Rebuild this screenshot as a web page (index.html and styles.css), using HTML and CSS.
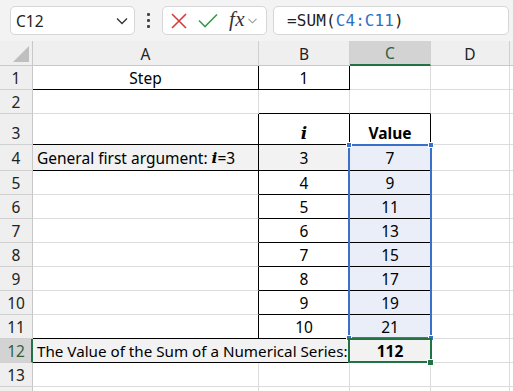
FILE: index.html
```html
<!DOCTYPE html>
<html>
<head>
<meta charset="utf-8">
<link rel="stylesheet" href="styles.css">
</head>
<body>
<div class="toolbar">
  <div class="namebox">
    <span class="nb-text">C12</span>
    <svg class="nb-chev" width="12" height="8" viewBox="0 0 12 8"><path d="M1 1.5 L6 6.5 L11 1.5" fill="none" stroke="#333" stroke-width="1.3"/></svg>
  </div>
  <div class="dots"><span></span><span></span><span></span></div>
  <div class="fxgroup">
    <svg class="ic-x" width="16" height="16" viewBox="0 0 16 16"><path d="M1 1 L15 15 M15 1 L1 15" stroke="#d83b3b" stroke-width="1.6" fill="none"/></svg>
    <svg class="ic-ok" width="20" height="15" viewBox="0 0 20 15"><path d="M1 7.5 L7 13.5 L19 1.5" stroke="#3c9a4f" stroke-width="1.6" fill="none"/></svg>
    <span class="fx">fx</span>
    <svg class="fx-chev" width="9" height="6" viewBox="0 0 9 6"><path d="M0.5 0.8 L4.5 4.8 L8.5 0.8" fill="none" stroke="#9a9a9a" stroke-width="1.1"/></svg>
  </div>
  <div class="formula">=SUM(<span class="ref">C4:C11</span>)</div>
</div>

<div class="sheet">
  <div class="corner"><span class="tri"></span></div>
  <div class="ch">A</div><div class="ch">B</div><div class="ch ch-act">C</div><div class="ch">D</div><div class="ch e"></div>

  <div class="rh">1</div><div class="c kb kr">Step</div><div class="c kb kr">1</div><div class="c"></div><div class="c"></div><div class="c e"></div>
  <div class="rh">2</div><div class="c"></div><div class="c kb"></div><div class="c kb"></div><div class="c"></div><div class="c e"></div>
  <div class="rh">3</div><div class="c kb kr"></div><div class="c kb kr"><span class="mi big">i</span></div><div class="c kb kr b">Value</div><div class="c"></div><div class="c e"></div>
  <div class="rh r4">4</div><div class="c g kb kr l r4">General first argument:&nbsp;<span class="mi">i</span>=3</div><div class="c g kb kr r4">3</div><div class="c bl kb kr r4">7</div><div class="c"></div><div class="c e"></div>
  <div class="rh">5</div><div class="c kr"></div><div class="c kb kr">4</div><div class="c bl kb kr">9</div><div class="c"></div><div class="c e"></div>
  <div class="rh">6</div><div class="c kr"></div><div class="c kb kr">5</div><div class="c bl kb kr">11</div><div class="c"></div><div class="c e"></div>
  <div class="rh">7</div><div class="c kr"></div><div class="c kb kr">6</div><div class="c bl kb kr">13</div><div class="c"></div><div class="c e"></div>
  <div class="rh">8</div><div class="c kr"></div><div class="c kb kr">7</div><div class="c bl kb kr">15</div><div class="c"></div><div class="c e"></div>
  <div class="rh">9</div><div class="c kr"></div><div class="c kb kr">8</div><div class="c bl kb kr">17</div><div class="c"></div><div class="c e"></div>
  <div class="rh">10</div><div class="c kr"></div><div class="c kb kr">9</div><div class="c bl kb kr">19</div><div class="c"></div><div class="c e"></div>
  <div class="rh">11</div><div class="c kb kr"></div><div class="c kb kr">10</div><div class="c bl kb kr">21</div><div class="c"></div><div class="c e"></div>
  <div class="rh rh-act">12</div><div class="c g kb kr l merged">The Value of the Sum of a Numerical Series:</div><div class="c g b">112</div><div class="c"></div><div class="c e"></div>
  <div class="rh">13</div><div class="c"></div><div class="c"></div><div class="c"></div><div class="c"></div><div class="c e"></div>
  <div class="rh"></div><div class="c"></div><div class="c"></div><div class="c"></div><div class="c"></div><div class="c e"></div>

  <div class="range"><span class="sq tl"></span><span class="sq tr"></span><span class="sq bl2"></span><span class="sq br2"></span></div>
  <div class="sel"><span class="handle"></span></div>
</div>
</body>
</html>
```

FILE: styles.css
```css
* { box-sizing: border-box; }
body {
  margin: 0;
  width: 513px;
  height: 391px;
  overflow: hidden;
  background: #fff;
  font-family: "Noto Sans", "DejaVu Sans", sans-serif;
  color: #000;
}

/* ---------- toolbar ---------- */
.toolbar {
  height: 41px;
  background: #f3f3f3;
  display: flex;
  align-items: center;
  padding-left: 10px;
}
.namebox {
  width: 125px;
  height: 29px;
  background: #fff;
  border: 1px solid #d6d6d6;
  border-radius: 5px;
  display: flex;
  align-items: center;
  justify-content: space-between;
  padding: 0 6px 0 5px;
}
.nb-text {
  font-family: "Noto Sans", sans-serif;
  font-size: 15.5px;
  color: #222;
}
.dots {
  width: 27px;
  display: flex;
  flex-direction: column;
  align-items: center;
  gap: 3px;
}
.dots span {
  width: 3px;
  height: 3px;
  border-radius: 1px;
  background: #444;
}
.fxgroup {
  width: 105px;
  height: 29px;
  background: #fff;
  border: 1px solid #d6d6d6;
  border-radius: 5px;
  display: flex;
  align-items: center;
  padding-left: 8px;
}
.ic-x { margin-right: 11px; }
.ic-ok { margin-right: 11px; }
.fx {
  font-family: "Liberation Serif", "DejaVu Serif", serif;
  font-style: italic;
  font-size: 21px;
  color: #333;
  line-height: 1;
  margin-top: -3px;
  margin-right: 3px;
  letter-spacing: 0.5px;
}
.formula {
  margin-left: 6px;
  width: 236px;
  height: 29px;
  background: #fff;
  border: 1px solid #d6d6d6;
  border-radius: 5px;
  display: flex;
  align-items: center;
  padding-left: 13px;
  font-family: "DejaVu Sans Mono", monospace;
  font-size: 16px;
  letter-spacing: 0.1px;
  color: #222;
}
.ref { color: #2f6fc4; }

/* ---------- sheet ---------- */
.sheet {
  position: relative;
  display: grid;
  grid-template-columns: 33px 226px 91px 81px 79px 1fr;
  grid-template-rows: 25px 24px 24px 31px 26px repeat(9, 24px) 30px;
}
.corner {
  background: #efefef;
  border-right: 1px solid #c8c8c8;
  border-bottom: 1px solid #c8c8c8;
  position: relative;
}
.tri {
  position: absolute;
  right: 3px;
  bottom: 3px;
  width: 0;
  height: 0;
  border-left: 16px solid transparent;
  border-bottom: 16px solid #bfbfbf;
}
.ch {
  background: #efefef;
  border-right: 1px solid #d0d0d0;
  border-bottom: 1px solid #c8c8c8;
  display: flex;
  align-items: center;
  justify-content: center;
  font-size: 15.5px;
  color: #222;
  padding-top: 1px;
}
.ch.e { border-right: none; }
.ch-act {
  background: #d3d3d3;
  color: #2f5f3c;
  border-bottom: 2px solid #217346;
}
.rh {
  background: #efefef;
  border-right: 1px solid #c8c8c8;
  border-bottom: 1px solid #d0d0d0;
  display: flex;
  align-items: flex-end;
  justify-content: center;
  padding-bottom: 1px;
  font-size: 15.5px;
  color: #222;
  line-height: 20px;
}
.rh-act {
  background: #d3d3d3;
  color: #2f5f3c;
  border-right: 2px solid #217346;
  padding-left: 1px;
}
.c {
  border-right: 1px solid #dcdcdc;
  border-bottom: 1px solid #dcdcdc;
  display: flex;
  align-items: flex-end;
  justify-content: center;
  padding-bottom: 1px;
  font-size: 15.5px;
  line-height: 20px;
  white-space: nowrap;
  overflow: hidden;
}
.c.e { border-right: none; }
.r4 { padding-bottom: 2px; }
.kb { border-bottom-color: #000; }
.kr { border-right-color: #000; }
.g { background: #f2f2f2; }
.bl { background: #e9eef8; }
.b { font-weight: 700; }
.l { justify-content: flex-start; padding-left: 4px; }
.merged {
  grid-column: 2 / 4;
  grid-row: 13;
  font-size: 15.2px;
}
.mi {
  font-family: "DejaVu Serif", "Liberation Serif", serif;
  font-style: italic;
  font-weight: 700;
}
.big { font-size: 17px; }

/* ---------- overlays (absolute, placed on grid areas) ---------- */
.range {
  position: absolute;
  grid-column: 4 / 5;
  grid-row: 5 / 13;
  top: -1px;
  bottom: 0;
  left: -2px;
  right: -1px;
  border: 2px solid #3a6fcc;
}
.sq {
  position: absolute;
  width: 6px;
  height: 6px;
  background: #3a6fcc;
  border: 1px solid #fff;
}
.tl { left: -4px; top: -4px; }
.tr { right: -4px; top: -4px; }
.bl2 { left: -4px; bottom: -4px; }
.br2 { right: -4px; bottom: -4px; }
.sel {
  position: absolute;
  grid-column: 4 / 5;
  grid-row: 13 / 14;
  top: -1px;
  bottom: 0;
  left: -2px;
  right: -1px;
  border: 2px solid #217346;
}
.handle {
  position: absolute;
  right: -4px;
  bottom: -5px;
  width: 7px;
  height: 7px;
  background: #217346;
  border: 1px solid #fff;
}
```
